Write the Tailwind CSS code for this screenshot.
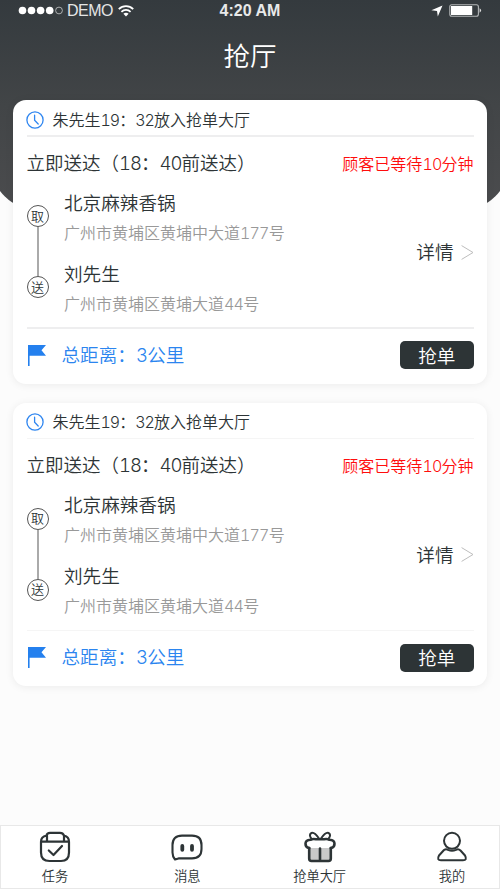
<!DOCTYPE html>
<html lang="zh-CN">
<head>
<meta charset="utf-8">
<title>抢厅</title>
<script src="https://cdn.jsdelivr.net/npm/@tailwindcss/browser@4"></script>
</head>
<body class="bg-[#fcfcfc]">
<svg class="hidden">
  <symbol id="clock" viewBox="0 0 18 18"><g fill="none" stroke="#2f86f0" stroke-width="1.3" stroke-linecap="round"><circle cx="9" cy="9" r="8.1"/><path d="M8.6 4.2V9.3L12.2 13"/></g></symbol>
  <symbol id="flag" viewBox="0 0 18 21"><path fill="#2480ee" d="M0 0H18L13.5 5.2L18 10.7H1.6V21H0Z"/></symbol>
  <symbol id="chev" viewBox="0 0 13 15"><path fill="none" stroke="#bdbdbd" stroke-width="1" d="M.6 .6L12 7.5L.6 14.4"/></symbol>
</svg>
<div class="relative isolate flex h-[889px] w-[500px] flex-col overflow-hidden font-[Inter,'Noto_Sans_CJK_SC',sans-serif] font-[350] tabular-nums text-[#2d3436]">
  <div class="absolute -left-[10px] top-0 -z-10 h-[211px] w-[520px] rounded-b-[50px] bg-linear-to-b from-[#343a3e] via-[#424547] via-50% to-[#4b4c4e]"></div>

  <header class="h-[100px] text-white">
    <div class="grid h-5 grid-cols-3 items-center pl-[18px] pr-[18px] font-['Liberation_Sans',sans-serif] text-[16px] leading-5">
      <div class="flex items-center">
        <svg class="h-[9px] w-[46px]" viewBox="0 0 46 9"><g fill="#fff"><circle cx="4.5" cy="4.5" r="3.8"/><circle cx="13.5" cy="4.5" r="3.8"/><circle cx="22.6" cy="4.5" r="3.8"/><circle cx="31.7" cy="4.5" r="3.8"/></g><circle cx="41" cy="4.5" r="3.4" fill="none" stroke="#c8caca" stroke-width=".8"/></svg>
        <span class="ml-[3px] w-[47px] pt-px text-[16px] tracking-[-0.5px] text-[#e4e5e5]">DEMO</span>
        <svg class="ml-[4px] h-3 w-4" viewBox="0 0 16 12"><g fill="none" stroke="#fff" stroke-width="1.8"><path d="M.8 4.1C4.8 .1 11.2 .1 15.2 4.1"/><path d="M3.4 6.8C6 4.3 10 4.3 12.6 6.8"/></g><path fill="#fff" d="M5.4 8.8C6.9 7.5 9.1 7.5 10.6 8.8L8 11.6Z"/></svg>
      </div>
      <span class="pt-px text-center text-[16px] font-bold text-[#e8e9e9]">4:20 AM</span>
      <div class="flex items-center justify-end">
        <svg class="h-[12px] w-[12px]" viewBox="0 0 12 12"><path fill="#fff" d="M11.5 .4L6.8 11.5L6 6L.4 5.3Z"/></svg>
        <svg class="ml-[6px] h-[13px] w-[33px]" viewBox="0 0 33 13"><rect x=".8" y=".7" width="28.6" height="11.6" rx="2" fill="none" stroke="#b4b7b8" stroke-width="1.1"/><rect x="2" y="2" width="21.2" height="9" fill="#fff"/><path fill="#ddd" d="M30.6 4.3Q33.6 6.5 30.6 8.7Z"/></svg>
      </div>
    </div>
    <h1 class="pt-[16px] text-center text-[26.5px] leading-10">抢厅</h1>
  </header>

  <main class="flex flex-col gap-[18.5px] px-[13px]">
    <section class="h-[284px] rounded-[13px] bg-white px-[13.5px] shadow-[0_1px_8px_rgba(0,0,0,0.07)]">
      <div class="flex h-[35px] items-center pt-[4px]">
        <svg class="-ml-[1px] h-[18px] w-[18px]"><use href="#clock"/></svg>
        <span class="ml-[9px] text-[16px]">朱先生<span class="tracking-[-1px]">19</span>：<span class="tracking-[-1px]">32</span>放入抢单大厅</span>
      </div>
      <div class="h-[2px] bg-[#eeeeef]"></div>
      <div class="flex h-[53px] items-center justify-between">
        <span class="text-[18.5px]">立即送达（<span class="tracking-[-1px]">18</span>：<span class="tracking-[-1px]">40</span>前送达）</span>
        <span class="text-[16px] text-[#ff0d0d]">顾客已等待<span class="tracking-[-0.8px]">10</span>分钟</span>
      </div>
      <div class="flex h-[137px]">
        <div class="flex w-[22px] flex-col items-center pt-[15px]">
          <span class="flex size-[22px] items-center justify-center rounded-full border border-[#555] text-[13px] leading-none">取</span>
          <span class="h-[49px] w-[2px] bg-[#aaa]"></span>
          <span class="flex size-[22px] items-center justify-center rounded-full border border-[#555] text-[13px] leading-none">送</span>
        </div>
        <div class="ml-[15.5px] flex-1 whitespace-nowrap">
          <p class="text-[18.6px] leading-[26px]">北京麻辣香锅</p>
          <p class="text-[16px] leading-[34px] text-[#999]">广州市黄埔区黄埔中大道<span class="tracking-[-0.8px]">177</span>号</p>
          <p class="mt-[11px] text-[18.6px] leading-[26px]">刘先生</p>
          <p class="text-[16px] leading-[34px] text-[#999]">广州市黄埔区黄埔大道<span class="tracking-[-0.8px]">44</span>号</p>
        </div>
        <div class="flex h-[124px] items-center">
          <span class="pt-[2px] text-[18.6px]">详情</span>
          <svg class="ml-[7px] h-[15px] w-[13px]"><use href="#chev"/></svg>
        </div>
      </div>
      <div class="h-[2px] bg-[#eeeeef]"></div>
      <div class="flex h-[52px] items-center">
        <svg class="ml-[1px] h-[21px] w-[18px]"><use href="#flag"/></svg>
        <span class="ml-[16px] flex-1 pt-[2px] text-[18.6px] text-[#2b85ef]">总距离：<span class="tracking-[-0.8px]">3</span>公里</span>
        <button class="h-[28px] w-[73.5px] rounded-[5px] bg-[#2d3436] pt-px text-[18.6px] leading-[28px] text-white">抢单</button>
      </div>
    </section>

    <section class="h-[283.5px] rounded-[13px] bg-white px-[13.5px] shadow-[0_1px_8px_rgba(0,0,0,0.07)]">
      <div class="flex h-[35px] items-center pt-[4px]">
        <svg class="-ml-[1px] h-[18px] w-[18px]"><use href="#clock"/></svg>
        <span class="ml-[9px] text-[16px]">朱先生<span class="tracking-[-1px]">19</span>：<span class="tracking-[-1px]">32</span>放入抢单大厅</span>
      </div>
      <div class="mb-[1px] h-[1px] bg-[#f5f5f5]"></div>
      <div class="flex h-[52px] items-center justify-between">
        <span class="text-[18.5px]">立即送达（<span class="tracking-[-1px]">18</span>：<span class="tracking-[-1px]">40</span>前送达）</span>
        <span class="text-[16px] text-[#ff0d0d]">顾客已等待<span class="tracking-[-0.8px]">10</span>分钟</span>
      </div>
      <div class="flex h-[138px]">
        <div class="flex w-[22px] flex-col items-center pt-[16px]">
          <span class="flex size-[22px] items-center justify-center rounded-full border border-[#555] text-[13px] leading-none">取</span>
          <span class="h-[49px] w-[2px] bg-[#aaa]"></span>
          <span class="flex size-[22px] items-center justify-center rounded-full border border-[#555] text-[13px] leading-none">送</span>
        </div>
        <div class="ml-[15.5px] flex-1 whitespace-nowrap">
          <p class="text-[18.6px] leading-[26px]">北京麻辣香锅</p>
          <p class="text-[16px] leading-[34px] text-[#999]">广州市黄埔区黄埔中大道<span class="tracking-[-0.8px]">177</span>号</p>
          <p class="mt-[11px] text-[18.6px] leading-[26px]">刘先生</p>
          <p class="text-[16px] leading-[34px] text-[#999]">广州市黄埔区黄埔大道<span class="tracking-[-0.8px]">44</span>号</p>
        </div>
        <div class="flex h-[126px] items-center">
          <span class="pt-[2px] text-[18.6px]">详情</span>
          <svg class="ml-[7px] h-[15px] w-[13px]"><use href="#chev"/></svg>
        </div>
      </div>
      <div class="mb-[1px] h-[1px] bg-[#f5f5f5]"></div>
      <div class="flex h-[52px] items-center">
        <svg class="ml-[1px] h-[21px] w-[18px]"><use href="#flag"/></svg>
        <span class="ml-[16px] flex-1 pt-px text-[18.6px] text-[#2b85ef]">总距离：<span class="tracking-[-0.8px]">3</span>公里</span>
        <button class="h-[28px] w-[73.5px] rounded-[5px] bg-[#2d3436] text-[18.6px] leading-[28px] text-white">抢单</button>
      </div>
    </section>
  </main>

  <nav class="mt-auto flex h-[64px] justify-between border border-[#e8e8e8] bg-white pl-[27px] pr-[20px] text-center text-[13.2px] leading-5">
    <a class="flex w-[54px] flex-col items-center pt-[5px]">
      <svg class="h-8 w-8" viewBox="0 0 32 32" fill="none" stroke="#2d3436" stroke-width="2.2" stroke-linecap="round" stroke-linejoin="round"><path d="M2 10.8V21.5Q2 30 10.5 30H22Q30 30 30 21.5V10.8Q30 5.500 25 4.500Q24 1.800 21 1.800H11Q8 1.800 7.500 4.500Q2 5.500 2 10.800ZM2 10.700H30M8 4.500V10.500M25 4.500V10.500"/><path d="M9.800 19.500L14.500 24L23 15"/></svg>
      <span class="mt-[3px]">任务</span>
    </a>
    <a class="flex w-[54px] flex-col items-center pt-[5px]">
      <svg class="h-8 w-8" viewBox="0 0 32 32" fill="none" stroke="#2d3436" stroke-width="2.1" stroke-linecap="round" stroke-linejoin="round"><path d="M4 28.500Q1.500 25.500 1.500 21.500V14Q1.500 4.600 11 4.600H21Q30.500 4.600 30.500 14V18Q30.500 27.400 21 27.400H7.500Z"/><path stroke-width="3.8" d="M11.300 15V18.800M21 15V18.800"/></svg>
      <span class="mt-[3px]">消息</span>
    </a>
    <a class="flex w-[54px] flex-col items-center pt-[5px]">
      <svg class="h-8 w-8" viewBox="0 0 32 32" fill="none" stroke="#2d3436" stroke-width="2.6" stroke-linecap="round" stroke-linejoin="round"><path fill="#c9c9c9" stroke="none" d="M5.500 16H26.500V29H5.500Z"/><path fill="#fff" stroke="none" d="M6 8.500H26Q30 9 30 12.500T26 17H6Q2 16 2 12.500T6 8.500Z"/><path d="M5.200 17V27.500Q5.200 30 7.500 30H24.500Q26.800 30 26.800 27.500V17M16 17.500V28.500"/><path d="M5.200 17Q1.500 16.500 1.500 12.700Q1.500 9.300 6.500 8.800Q9 7.500 12 8.300H20Q23 7.500 25.500 8.800Q30.500 9.300 30.500 12.700Q30.500 16.500 26.800 17"/><path stroke-width="2" d="M15 7.500Q10.500 1 7.500 2Q4.500 3.500 7.300 7.500M17 7.500Q21.500 1 24.500 2Q27.500 3.500 24.700 7.500"/></svg>
      <span class="mt-[3px]">抢单大厅</span>
    </a>
    <a class="flex w-[54px] flex-col items-center pt-[5px]">
      <svg class="h-8 w-8" viewBox="0 0 32 32" fill="none" stroke="#2d3436" stroke-width="2" stroke-linecap="round" stroke-linejoin="round"><circle cx="16" cy="9.800" r="8"/><path d="M8 19Q10 17.500 12 18.800Q16 20.500 20 18.800Q22.500 17.500 24.500 19.500L29 24.500Q31.500 29.200 27 29.200H5Q.500 29.200 3 24.500Z"/></svg>
      <span class="mt-[3px]">我的</span>
    </a>
  </nav>
</div>
</body>
</html>
